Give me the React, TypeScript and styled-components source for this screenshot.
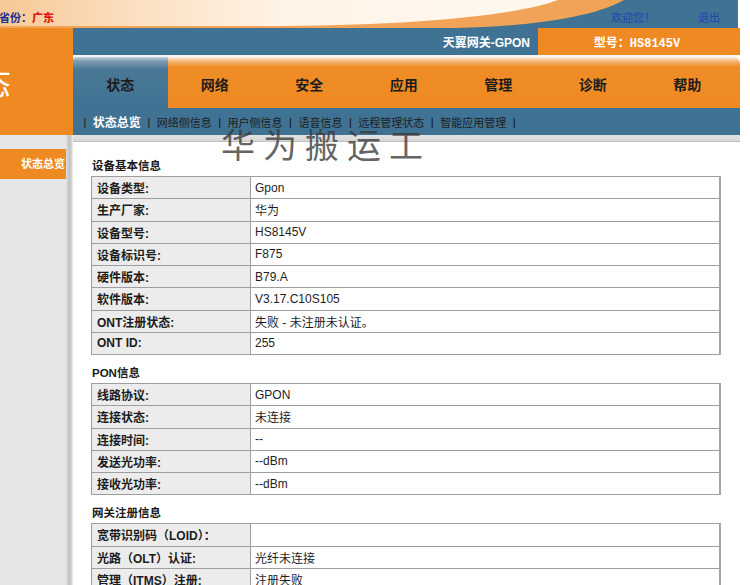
import React from 'react';
import styled, { createGlobalStyle } from 'styled-components';

const BLUE = '#3f7293';
const ORANGE = '#ef8a22';

const GlobalStyle = createGlobalStyle`
  html, body {
    margin: 0;
    padding: 0;
    overflow: hidden;
    background: #fff;
  }
  body {
    font-family: "Liberation Sans", "Noto Sans CJK SC", sans-serif;
    font-size: 12px;
    color: #222;
  }
`;

const Page = styled.div`
  position: relative;
  width: 740px;
  height: 585px;
  overflow: hidden;
  display: flex;
  flex-direction: column;
`;

/* top strip: artwork and text share one grid cell */
const Banner = styled.div`
  display: grid;
  height: 28px;

  & > * {
    grid-area: 1 / 1;
  }
`;

const BannerArt = styled.svg`
  display: block;
  width: 740px;
  height: 28px;
`;

const BannerBar = styled.div`
  display: flex;
  align-items: flex-end;
  padding: 0 20px 3px 0;
  line-height: 14px;
  font-size: 11px;
  font-weight: bold;
`;

const Province = styled.span`
  color: #1c2d8a;
  margin-left: -1px;

  b {
    color: #e3170f;
  }
`;

const TopLink = styled.span<{ $first?: boolean }>`
  color: #2342b0;
  font-weight: normal;
  margin-left: ${p => (p.$first ? 'auto' : '43px')};
`;

const Header = styled.div`
  display: grid;
  grid-template-columns: 73px 667px;
`;

const Emblem = styled.div`
  height: 107px;
  background: ${ORANGE};
  overflow: hidden;
  display: flex;
  align-items: center;
  color: #fff;
  font-size: 32px;
  font-family: "Noto Sans CJK SC", sans-serif;
`;

const EmblemGlyph = styled.span`
  margin-left: -21px;
  padding-bottom: 2px;
`;

const HeaderRight = styled.div`
  display: flex;
  flex-direction: column;
`;

const TitleBar = styled.div`
  height: 27px;
  display: grid;
  grid-template-columns: 465px 1fr;
  color: #fff;
  font-weight: bold;
`;

const Product = styled.div`
  background: ${BLUE};
  display: flex;
  align-items: center;
  justify-content: flex-end;
  padding-right: 8px;
`;

const Model = styled.div`
  background: ${ORANGE};
  display: flex;
  align-items: center;
  justify-content: center;
  font-family: "Liberation Mono", "Noto Sans CJK SC", monospace;
  padding-right: 4px;
`;

const NavRow = styled.div`
  height: 51px;
  border-top: 2px solid #f3f5f6;
  border-top-right-radius: 8px;
  display: grid;
  grid-template-columns: repeat(7, 94.5px);
  background: linear-gradient(#fdf0e2 0, #f6b77a 4px, #ef8c26 10px, ${ORANGE} 100%);
`;

const Tab = styled.div<{ $active?: boolean }>`
  display: flex;
  align-items: center;
  justify-content: center;
  padding-top: 3px;
  font-size: 14px;
  font-weight: bold;
  color: #1c1c1c;
  border-top-left-radius: ${p => (p.$active ? '4px' : '0')};
  background: ${p =>
    p.$active
      ? `linear-gradient(#c5d4de 0, #7f9fb4 4px, #4a7996 12px, ${BLUE} 100%)`
      : 'transparent'};
`;

const SubNav = styled.div`
  height: 27px;
  background: ${BLUE};
  display: flex;
  align-items: center;
  padding-left: 4px;
  font-size: 11px;
  color: #1e1e1e;
`;

const Sep = styled.span`
  color: #111;
  margin: 0 6.5px;
`;

const SubItem = styled.span<{ $active?: boolean }>`
  color: ${p => (p.$active ? '#fff' : '#1e1e1e')};
  font-weight: ${p => (p.$active ? 'bold' : 'normal')};
  font-size: ${p => (p.$active ? '12px' : '11px')};
`;

const Body = styled.div`
  flex: 1;
  display: grid;
  grid-template-columns: 73px 667px;
`;

const Sidebar = styled.div`
  background: linear-gradient(
    to right,
    #e6e6e6 0,
    #e6e6e6 66px,
    #d2d2d2 67px,
    #c2c2c2 70px,
    #dcdcdc 72px,
    #f4f4f4 73px
  );
  padding-top: 14px;
`;

const SideItem = styled.div`
  width: 66px;
  height: 30px;
  line-height: 30px;
  background: ${ORANGE};
  color: #fff;
  font-size: 11px;
  font-weight: bold;
  text-align: right;
  box-sizing: border-box;
  padding-right: 1px;
`;

const Main = styled.div`
  background: #fff;
`;

const Rule = styled.div`
  height: 6px;
  background: linear-gradient(#e4e4e4, #d6d6d6);
  border-bottom: 1px solid #bfbfbf;
`;

const Content = styled.div`
  padding: 0 0 0 18px;
`;

const SectionTitle = styled.div<{ $first?: boolean }>`
  padding: ${p => (p.$first ? '16px' : '10px')} 0 0 1px;
  margin-bottom: 2px;
  line-height: 16px;
  font-weight: bold;
  font-size: 11.5px;
  color: #1a1a1a;
`;

const InfoTable = styled.table`
  width: 630px;
  border-collapse: collapse;
  border: 1px solid #9c9c9c;
  table-layout: fixed;
`;

const LabelCell = styled.td`
  width: 159px;
  height: 21.25px;
  padding: 0 0 0 5px;
  box-sizing: border-box;
  background: #ececec;
  border: 1px solid #9e9e9e;
  font-weight: bold;
  font-size: 12px;
  color: #1c1c1c;
  white-space: nowrap;
`;

const ValueCell = styled.td`
  height: 21.25px;
  padding: 0 0 0 4px;
  border: 1px solid #9e9e9e;
  border-right: 2px solid #a6a6a6;
  font-size: 12px;
  color: #1e1e1e;
  white-space: nowrap;
`;

const Watermark = styled.div`
  position: absolute;
  left: 221px;
  top: 119px;
  font-family: "Noto Sans CJK SC", sans-serif;
  font-size: 34px;
  letter-spacing: 8px;
  color: rgba(58, 58, 58, 0.8);
  pointer-events: none;
`;

type Row = [string, string];

const sections: { title: string; rows: Row[] }[] = [
  {
    title: '设备基本信息',
    rows: [
      ['设备类型:', 'Gpon'],
      ['生产厂家:', '华为'],
      ['设备型号:', 'HS8145V'],
      ['设备标识号:', 'F875'],
      ['硬件版本:', 'B79.A'],
      ['软件版本:', 'V3.17.C10S105'],
      ['ONT注册状态:', '失败 - 未注册未认证。'],
      ['ONT ID:', '255'],
    ],
  },
  {
    title: 'PON信息',
    rows: [
      ['线路协议:', 'GPON'],
      ['连接状态:', '未连接'],
      ['连接时间:', '--'],
      ['发送光功率:', '--dBm'],
      ['接收光功率:', '--dBm'],
    ],
  },
  {
    title: '网关注册信息',
    rows: [
      ['宽带识别码（LOID）：', ''],
      ['光路（OLT）认证:', '光纤未连接'],
      ['管理（ITMS）注册:', '注册失败'],
      ['业务配置下发:', '--'],
    ],
  },
];

const tabs = ['状态', '网络', '安全', '应用', '管理', '诊断', '帮助'];
const subItems = ['状态总览', '网络侧信息', '用户侧信息', '语音信息', '远程管理状态', '智能应用管理'];

const BannerDrawing = () => (
  <BannerArt viewBox="0 0 740 28" preserveAspectRatio="none">
    <defs>
      <linearGradient id="creamFade" x1="0" x2="1" y1="0" y2="0">
        <stop offset="0" stopColor="#f7c996" />
        <stop offset="0.25" stopColor="#fbe0c2" />
        <stop offset="0.5" stopColor="#fff3e6" />
        <stop offset="1" stopColor="#fff8f0" />
      </linearGradient>
    </defs>
    <rect x="0" y="0" width="738" height="28" fill={BLUE} />
    <path d="M0 0 H624 C600 14 545 26 455 28 H0 Z" fill="#f1a457" />
    <path d="M0 0 H558 C520 14 430 25 280 26 H0 Z" fill="url(#creamFade)" />
  </BannerArt>
);

export default function App() {
  return (
    <>
      <GlobalStyle />
      <Page>
        <Banner>
          <BannerDrawing />
          <BannerBar>
            <Province>
              省份：<b>广东</b>
            </Province>
            <TopLink $first>欢迎您！</TopLink>
            <TopLink>退出</TopLink>
          </BannerBar>
        </Banner>

        <Header>
          <Emblem>
            <EmblemGlyph>态</EmblemGlyph>
          </Emblem>
          <HeaderRight>
            <TitleBar>
              <Product>天翼网关-GPON</Product>
              <Model>型号：HS8145V</Model>
            </TitleBar>
            <NavRow>
              {tabs.map((t, i) => (
                <Tab key={t} $active={i === 0}>
                  {t}
                </Tab>
              ))}
            </NavRow>
            <SubNav>
              <Sep>|</Sep>
              {subItems.map((s, i) => (
                <React.Fragment key={s}>
                  <SubItem $active={i === 0}>{s}</SubItem>
                  <Sep>|</Sep>
                </React.Fragment>
              ))}
            </SubNav>
          </HeaderRight>
        </Header>

        <Body>
          <Sidebar>
            <SideItem>状态总览</SideItem>
          </Sidebar>
          <Main>
            <Rule />
            <Content>
              {sections.map((sec, si) => (
                <React.Fragment key={sec.title}>
                  <SectionTitle $first={si === 0}>{sec.title}</SectionTitle>
                  <InfoTable>
                    <tbody>
                      {sec.rows.map(([label, value]) => (
                        <tr key={label}>
                          <LabelCell>{label}</LabelCell>
                          <ValueCell>{value}</ValueCell>
                        </tr>
                      ))}
                    </tbody>
                  </InfoTable>
                </React.Fragment>
              ))}
            </Content>
          </Main>
        </Body>

        <Watermark>华为搬运工</Watermark>
      </Page>
    </>
  );
}
